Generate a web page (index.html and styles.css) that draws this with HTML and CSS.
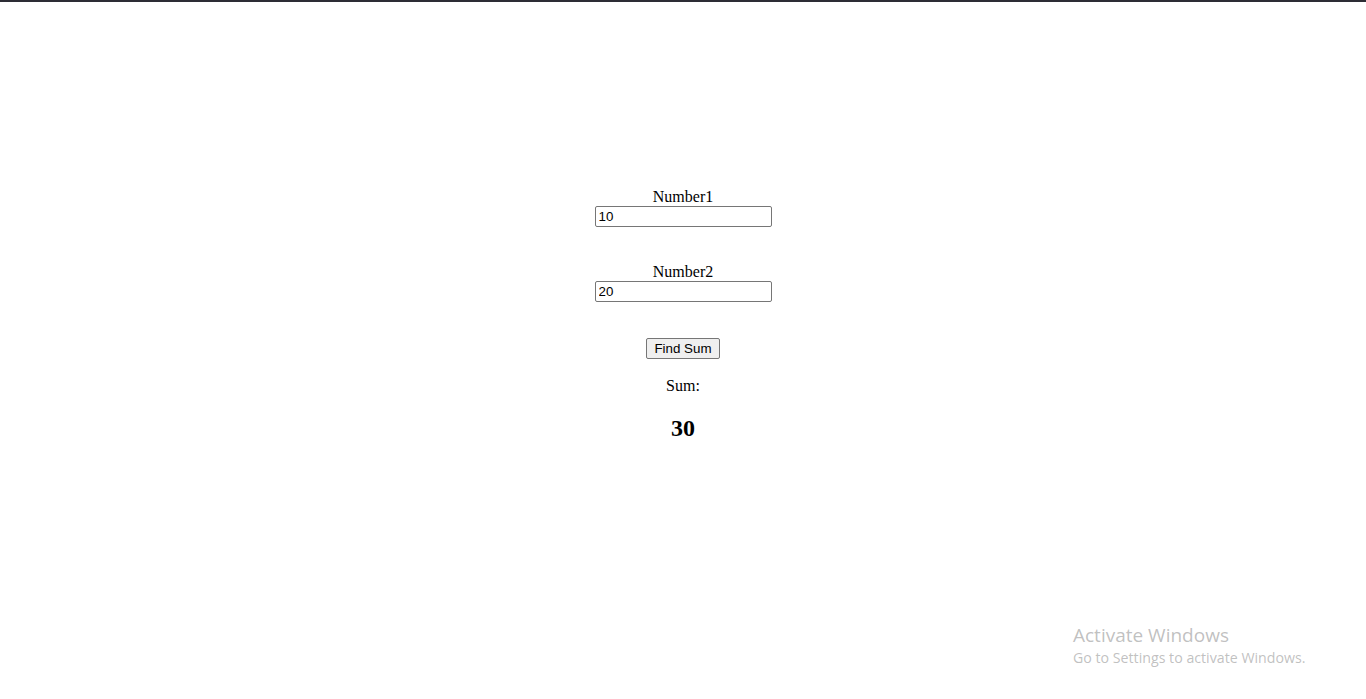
FILE: index.html
```html
<!DOCTYPE html>
<html>
<head>
<meta charset="utf-8">
<title>Sum</title>
<link rel="stylesheet" href="styles.css">
</head>
<body>
<div class="topbar"></div>
<main class="calc">
  <label class="field">
    <span class="label">Number1</span>
    <input class="num" type="text" value="10">
  </label>
  <label class="field">
    <span class="label">Number2</span>
    <input class="num" type="text" value="20">
  </label>
  <button class="btn" type="button">Find Sum</button>
  <p class="sum-label">Sum:</p>
  <h2 class="sum-value">30</h2>
</main>
<div class="activate">
  <div class="act-title">Activate Windows</div>
  <div class="act-sub">Go to Settings to activate Windows.</div>
</div>
</body>
</html>
```
FILE: styles.css
```css
html, body {
  margin: 0;
  padding: 0;
  background: #fff;
}
body {
  font-family: "Liberation Serif", "Times New Roman", serif;
  font-size: 16px;
  color: #000;
  height: 699px;
  overflow: hidden;
  position: relative;
}
.topbar {
  height: 2px;
  background: #2d2d35;
}
.calc {
  display: flex;
  flex-direction: column;
  align-items: center;
  padding-top: 186px;
}
.field {
  display: flex;
  flex-direction: column;
  align-items: center;
  margin-bottom: 36px;
}
.label {
  line-height: 18px;
}
.num {
  box-sizing: border-box;
  width: 177px;
  height: 21px;
  margin: 0;
  padding: 1px 3px;
  border: 1px solid #767676;
  border-radius: 2px;
  font-family: "Liberation Sans", Arial, sans-serif;
  font-size: 13.33px;
  color: #000;
  background: #fff;
}
.btn {
  box-sizing: border-box;
  width: 74px;
  height: 21px;
  margin: 0;
  padding: 1px 6px;
  border: 1px solid #767676;
  border-radius: 2px;
  background: #efefef;
  font-family: "Liberation Sans", Arial, sans-serif;
  font-size: 13.33px;
  color: #000;
}
.sum-label {
  margin: 18px 0 0;
  line-height: 18px;
}
.sum-value {
  margin: 19px 0 0;
  font-size: 24px;
  line-height: 28px;
  font-weight: bold;
}
.activate {
  position: absolute;
  left: 1073px;
  top: 622px;
  color: rgba(140, 140, 140, 0.55);
  font-family: "Open Sans", "Noto Sans", sans-serif;
}
.act-title {
  font-size: 19px;
  line-height: 26px;
}
.act-sub {
  font-size: 14.2px;
  line-height: 20px;
}
```
